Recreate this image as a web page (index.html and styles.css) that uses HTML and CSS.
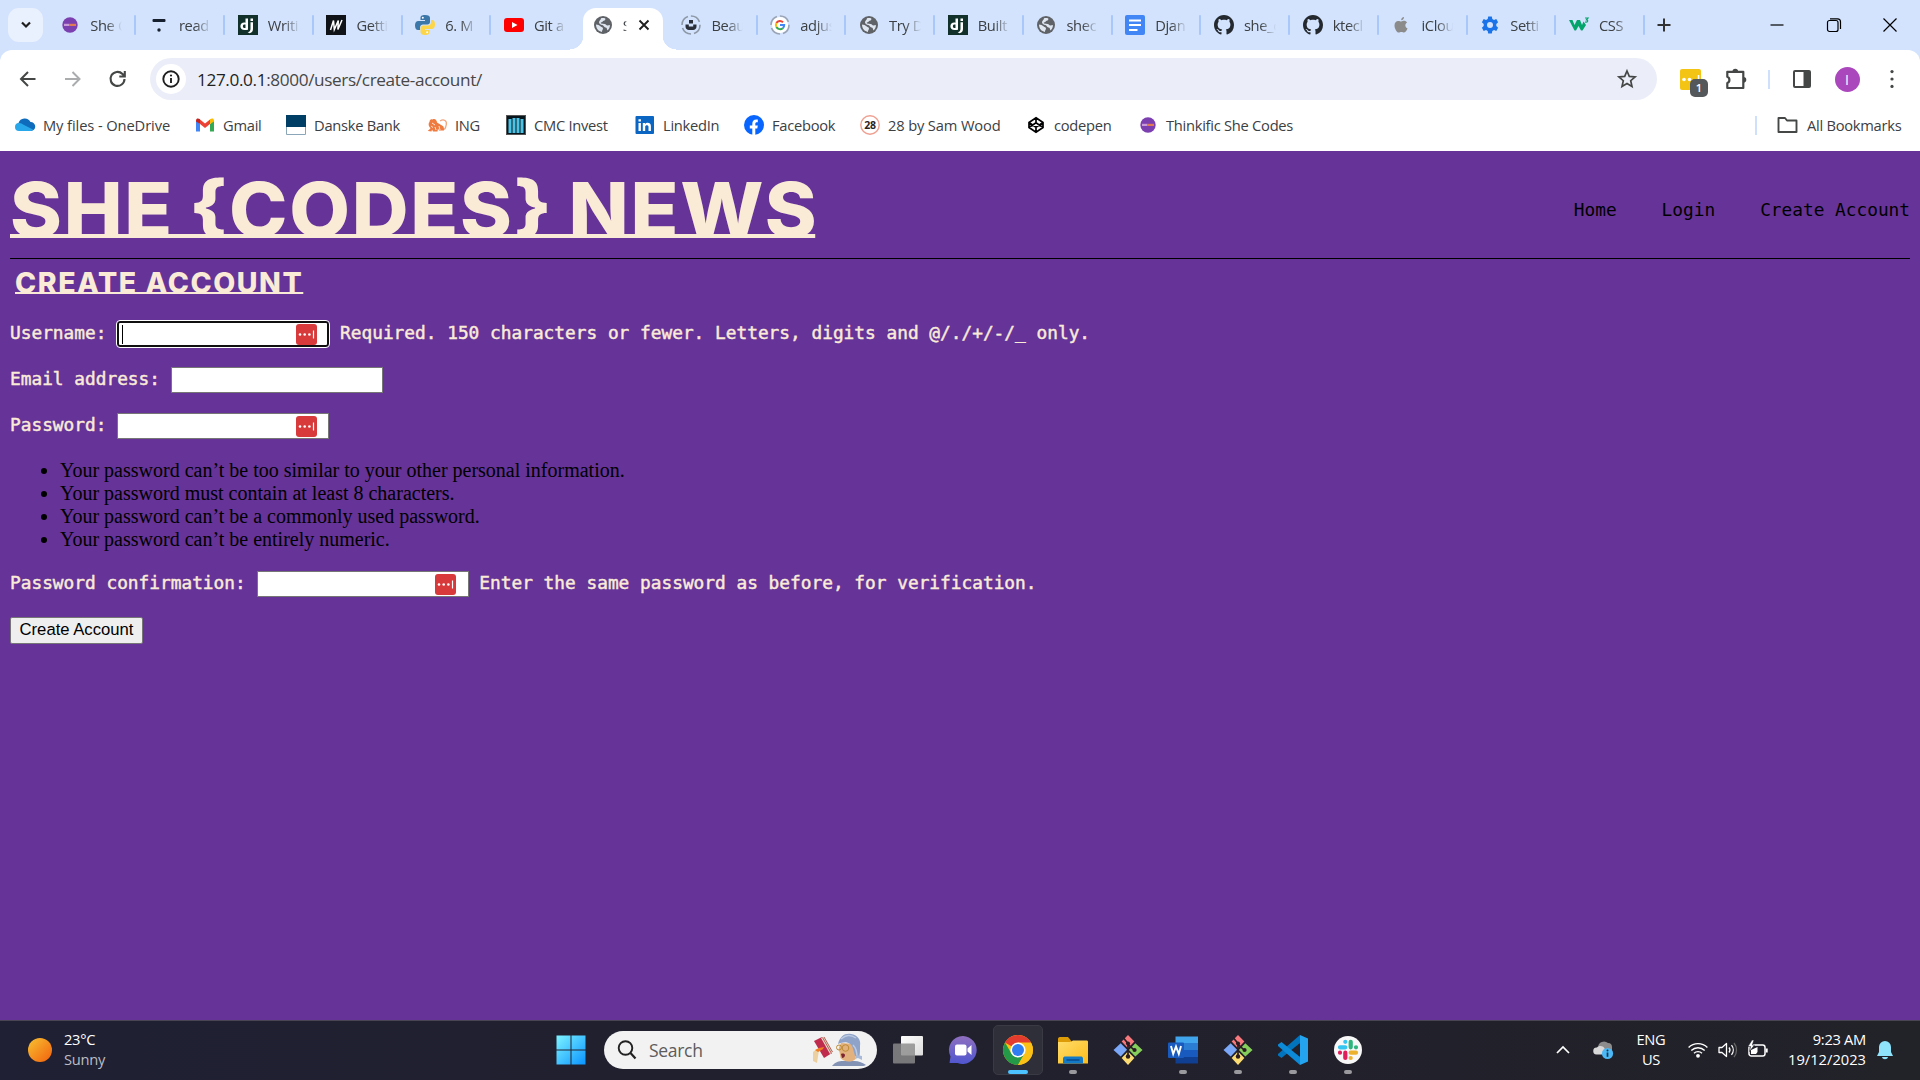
FILE: index.html
```html
<!DOCTYPE html>
<html lang="en">
<head>
<meta charset="utf-8">
<title>She Codes News</title>
<link rel="stylesheet" href="styles.css">
</head>
<body>
<svg class="sprite" aria-hidden="true">
  <defs>
    <linearGradient id="gSun" x1="0" y1="0" x2="1" y2="1"><stop offset="0" stop-color="#f7c232"/><stop offset="1" stop-color="#f1600d"/></linearGradient>
    <linearGradient id="gWin" x1="0" y1="0" x2="1" y2="1"><stop offset="0" stop-color="#7df3ff"/><stop offset="1" stop-color="#0a94ff"/></linearGradient>
    <linearGradient id="gTeams" x1="0" y1="0" x2="0" y2="1"><stop offset="0" stop-color="#8f6fc0"/><stop offset="1" stop-color="#4f56cf"/></linearGradient>
    <linearGradient id="gFolder" x1="0" y1="0" x2="1" y2="1"><stop offset="0" stop-color="#ffdc6b"/><stop offset="1" stop-color="#fcbc1b"/></linearGradient>
    <linearGradient id="gView" x1="0" y1="0" x2="1" y2="1"><stop offset="0" stop-color="#fff"/><stop offset="1" stop-color="#dcdcdc"/></linearGradient>
  </defs>
  <symbol id="she" viewBox="0 0 20 20"><circle cx="10" cy="10" r="7.7" fill="#7c3fb0"/><rect x="4" y="8.8" width="5.5" height="2.2" fill="#c79ad8"/><rect x="9.5" y="8.8" width="6.5" height="2.2" fill="#e07a55"/></symbol>
  <symbol id="dj" viewBox="0 0 20 20"><rect width="20" height="20" fill="#11312a"/><path d="M10 3.5v11.2c-1.3.3-2.2.4-3.3.4-2.9 0-4.3-1.4-4.3-3.8 0-2.300 1.500-3.800 3.800-3.800.5 0 .9 0 1.300.2V3.500zM7.500 9.600c-.3-.1-.6-.1-.9-.1-1.100 0-1.700.6-1.700 1.800 0 1.100.6 1.800 1.700 1.800h.9zM15 7.300v6.200c0 2.500-.6 3.700-3.400 4.700l-2-.9c2.400-.9 2.900-1.800 2.900-3.900V7.300zM12.500 3.500H15v2.400h-2.500z" fill="#fff"/></symbol>
  <symbol id="globe" viewBox="0 0 20 20"><circle cx="10" cy="10" r="9" fill="#5f6368"/><path d="M3 9.500c1.800.2 3.400.8 4.800 2 .8.700 2.200.6 2.200 2 0 1.200-1 1.500-1.100 3.400C5.500 16.400 3 13.500 3 9.500zM8 3.300c1.500-.5 3-.4 4.300.1.2 1.400-.3 2-1.600 2.300-1 .3-.9 1.400-2.200 1.500-.8.100-1 .9-.4 1.300l3.700.5c1.100.2 1.400 1.500 2.600 1.500l2.500-.6c.2 2.500-1.100 4.400-2.500 5.600-.5-1.600-.3-2.800-2-3-1.600-.3-1.600-2-3.100-2.400C7.500 9.600 6 9 6 7.300 6 5.600 7.900 5.300 8 3.300z" fill="#dfe6f0"/></symbol>
  <symbol id="gh" viewBox="0 0 16 16"><path fill="#24292f" d="M8 0C3.580 0 0 3.580 0 8c0 3.540 2.290 6.530 5.470 7.590.4.070.55-.17.55-.38 0-.19-.01-.82-.01-1.490-2.010.37-2.530-.49-2.690-.94-.09-.23-.48-.94-.82-1.130-.28-.15-.68-.52-.01-.53.63-.01 1.080.58 1.230.82.72 1.210 1.870.87 2.330.66.070-.52.280-.87.510-1.070-1.780-.2-3.640-.89-3.640-3.950 0-.87.310-1.590.82-2.150-.08-.2-.36-1.020.080-2.120 0 0 .67-.21 2.200.82.640-.18 1.320-.27 2-.27s1.360.09 2 .27c1.530-1.040 2.200-.82 2.200-.82.440 1.100.160 1.920.080 2.120.510.560.820 1.270.820 2.150 0 3.070-1.870 3.750-3.650 3.950.290.250.540.730.540 1.480 0 1.070-.01 1.930-.01 2.200 0 .21.150.460.550.38A8.010 8.010 0 0 0 16 8c0-4.420-3.580-8-8-8z"/></symbol>
  <symbol id="git" viewBox="0 0 32 32"><path d="M16 0l6.800 7-6.800 7-6.800-7z" fill="#f7797d"/><path d="M8.200 8.800l6.800 7-6.800 7L.5 16z" fill="#7aa7f7"/><path d="M23.800 8.800L31.500 16l-7.700 7-6.800-7z" fill="#87cf5b"/><path d="M16 17.500l6.800 7L16 32l-6.800-7.500z" fill="#fbdc72"/><path d="M11 3l5 6v14M16 10l6.500 6" fill="none" stroke="#2a1c22" stroke-width="1.800"/><circle cx="16" cy="9" r="2.200" fill="#2a1c22"/><circle cx="16" cy="23" r="2.400" fill="#2a1c22"/><circle cx="23" cy="16" r="2.200" fill="#2a1c22"/></symbol>
  <symbol id="pm" viewBox="0 0 21 21"><rect width="21" height="21" rx="3" fill="#d8393a"/><circle cx="4" cy="10.500" r="1.300" fill="#fff"/><circle cx="8.700" cy="10.500" r="1.300" fill="#fff"/><circle cx="13.400" cy="10.500" r="1.300" fill="#fff"/><path d="M17.500 6.500v8" stroke="#fff" stroke-width="1.200"/></symbol>
</svg>

<header class="browser">
  <div class="tabstrip">
    <div class="tab-search"><svg width="12" height="12" viewBox="0 0 12 12"><path d="M2 3.500l4 4 4-4" fill="none" stroke="#1f1f1f" stroke-width="2.200"/></svg></div>
    <div class="tab"><svg class="fav"><use href="#she"/></svg><span>She C</span></div>
    <div class="tab"><svg class="fav" viewBox="0 0 20 20"><rect x="3.500" y="4" width="13" height="3" rx="1" fill="#17202e"/><circle cx="10" cy="15" r="1.700" fill="#17202e"/></svg><span>read</span></div>
    <div class="tab"><svg class="fav"><use href="#dj"/></svg><span>Writi</span></div>
    <div class="tab"><svg class="fav" viewBox="0 0 20 20"><rect width="20" height="20" fill="#101418"/><path d="M4.500 15L7.500 5.500l.8 9 4-9-.4 9L16 5" fill="none" stroke="#fff" stroke-width="1.500"/></svg><span>Getti</span></div>
    <div class="tab"><svg class="fav" viewBox="0 0 20 20"><path d="M10 0c-3.500 0-4.500 1-4.500 3v2H10v1H3.500C1 6 0 8 0 10.500S1 15 3 15h2v-2.500C5 10.500 6.500 9.500 8 9.500h4.500c1.500 0 2.500-1 2.500-2.500V3c0-2-1.500-3-5-3z" fill="#3b77a8"/><path d="M10 20c3.500 0 4.500-1 4.500-3v-2H10v-1h6.500c2.500 0 3.500-2 3.500-4.500S19 5 17 5h-1v2.500c0 2-1.500 3-3 3H8C6.500 10.500 5.500 11.500 5.500 13v4c0 2 1.500 3 4.500 3z" fill="#fcd548"/><circle cx="7.800" cy="2.800" r="1" fill="#fff"/><circle cx="12.200" cy="17.200" r="1" fill="#fff"/></svg><span>6. M</span></div>
    <div class="tab no-sep"><svg class="fav" viewBox="0 0 20 20"><rect y="3" width="20" height="14" rx="3" fill="#f00"/><path d="M8 7l5.500 3L8 13z" fill="#fff"/></svg><span>Git a</span></div>
    <div class="tab active"><svg class="fav"><use href="#globe"/></svg><span class="tiny">S</span><svg class="tab-close" viewBox="0 0 12 12"><path d="M1.500 1.500l9 9M10.500 1.500l-9 9" stroke="#1f1f1f" stroke-width="1.900"/></svg></div>
    <div class="tab"><svg class="fav" viewBox="0 0 20 20"><circle cx="10" cy="10" r="9" fill="none" stroke="#8e99a8" stroke-width="1.600" stroke-dasharray="11 3"/><path d="M8 5h4v3.500H8zM4.500 9.500h3.300v2h4.400v-2h3.300v2c0 2-1.500 3.500-3.500 3.500H8c-2 0-3.500-1.500-3.500-3.500z" fill="#2b3038"/></svg><span>Beau</span></div>
    <div class="tab"><svg class="fav" viewBox="0 0 20 20"><circle cx="10" cy="10" r="8" fill="#fff"/><circle cx="10" cy="10" r="9" fill="none" stroke="#9aa4b4" stroke-width="1.600" stroke-dasharray="11 3"/><g fill="none" stroke-width="2"><path d="M13 7.200A4.200 4.200 0 0 0 6.400 8" stroke="#ea4335"/><path d="M6.400 8a4.200 4.200 0 0 0 0 4" stroke="#fbbc05"/><path d="M6.400 12a4.200 4.200 0 0 0 6.400 1.200" stroke="#34a853"/><path d="M12.800 13.200A4.200 4.200 0 0 0 14.200 10H10" stroke="#4285f4"/></g></svg><span>adjus</span></div>
    <div class="tab"><svg class="fav"><use href="#globe"/></svg><span>Try D</span></div>
    <div class="tab"><svg class="fav"><use href="#dj"/></svg><span>Built</span></div>
    <div class="tab"><svg class="fav"><use href="#globe"/></svg><span>shec</span></div>
    <div class="tab"><svg class="fav" viewBox="0 0 20 20"><rect width="20" height="20" rx="2" fill="#4285f4"/><path d="M4 5.500h12M4 10h12M4 15h8.500" stroke="#fff" stroke-width="2"/></svg><span>Djan</span></div>
    <div class="tab"><svg class="fav"><use href="#gh"/></svg><span>she_c</span></div>
    <div class="tab"><svg class="fav"><use href="#gh"/></svg><span>ktecl</span></div>
    <div class="tab"><svg class="fav" viewBox="0 0 20 20"><path d="M13 2c.1 1.800-1.200 3.200-2.800 3.300C10 3.600 11.500 2.200 13 2zM10.300 6.500c.8 0 1.500-.7 2.800-.7 1.200 0 2.300.7 2.900 1.600-2.500 1.600-2 4.900.5 5.900-.6 1.700-1.800 4.200-3.400 4.200-1.100 0-1.400-.6-2.700-.6s-1.700.6-2.700.6C5.900 17.500 3.500 13.500 3.500 10.400c0-2.800 1.700-4.500 3.700-4.500 1.400 0 2.200.6 3.100.6z" fill="#8b8b8b"/></svg><span>iClou</span></div>
    <div class="tab"><svg class="fav" viewBox="0 0 20 20"><path d="M8.200 1.500h3.600l.5 2.400 1.700 1 2.300-.8 1.800 3.200-1.800 1.700v2l1.800 1.700-1.800 3.200-2.300-.8-1.700 1-.5 2.400H8.200l-.5-2.400-1.700-1-2.300.8-1.800-3.200L3.700 11V9L1.900 7.300l1.800-3.200 2.300.8 1.700-1z" fill="#1a73e8"/><circle cx="10" cy="10" r="3" fill="#d3e3fd"/></svg><span>Setti</span></div>
    <div class="tab"><svg class="fav" viewBox="0 0 20 20"><path d="M0 5h3.500l2 5 2.500-5h3l2 5 1.500-3.500 2.500 3.500-3.500 5.500h-1.500L9.500 11 7 15.500H5.500z" fill="#04a56c"/><path d="M16 3h3l-1.500 1.800c2 .2 1.500 2.700-1.500 2.200" fill="none" stroke="#04a56c" stroke-width="1.200"/></svg><span>CSS</span></div>
    <svg class="new-tab" viewBox="0 0 14 14"><path d="M7 .5v13M.5 7h13" stroke="#333" stroke-width="2"/></svg>
    <div class="win-controls">
      <svg viewBox="0 0 16 16"><path d="M1.500 8h13" stroke="#000" stroke-width="1.200"/></svg>
      <svg viewBox="0 0 16 16"><rect x="1.500" y="3.500" width="10.500" height="11" rx="2" fill="none" stroke="#000" stroke-width="1.200"/><path d="M4 1.800h7.500a3 3 0 0 1 3 3V12" fill="none" stroke="#000" stroke-width="1.200"/></svg>
      <svg viewBox="0 0 16 16"><path d="M1.500 1.500l13 13M14.500 1.500l-13 13" stroke="#000" stroke-width="1.200"/></svg>
    </div>
  </div>

  <div class="toolbar">
    <div class="nav-buttons">
      <svg viewBox="0 0 20 20"><path d="M17.500 10H3M10 3l-7 7 7 7" fill="none" stroke="#454746" stroke-width="2"/></svg>
      <svg viewBox="0 0 20 20"><path d="M2 10h14.500M9.500 3l7 7-7 7" fill="none" stroke="#aaacae" stroke-width="2"/></svg>
      <svg viewBox="0 0 20 20"><path d="M16.500 10a7 7 0 1 1-2-5l2 2M16.800 2v5.500h-5.500" fill="none" stroke="#454746" stroke-width="2.100"/></svg>
    </div>
    <div class="omnibox">
      <div class="site-info"><svg viewBox="0 0 20 20"><circle cx="10" cy="10" r="7.700" fill="none" stroke="#1f1f1f" stroke-width="1.900"/><path d="M10 9v5" stroke="#1f1f1f" stroke-width="1.900"/><circle cx="10" cy="6.500" r="1.100" fill="#1f1f1f"/></svg></div>
      <div class="url"><b>127.0.0.1</b>:8000/users/create-account/</div>
      <svg class="star" viewBox="0 0 20 20"><path d="M10 2l2.300 5.400 5.800.5-4.400 3.800 1.300 5.700-5-3-5 3 1.300-5.700L1.900 7.900l5.800-.5z" fill="none" stroke="#454746" stroke-width="1.700"/></svg>
    </div>
    <div class="tools">
      <div class="ext"><svg viewBox="0 0 21 21"><rect width="21" height="21" rx="2" fill="#f3c414"/><circle cx="4" cy="10.500" r="1.800" fill="#fff"/><circle cx="9.500" cy="10.500" r="1.800" fill="#fff"/><path d="M18.500 6v8" stroke="#fff" stroke-width="1.500"/></svg><span class="count">1</span></div>
      <svg class="puzzle" viewBox="0 0 22 22"><path d="M2.300 3.800h16V20h-16v-5c2.800-1 2.800-5.200 0-6.200z" fill="none" stroke="#454746" stroke-width="2.200" stroke-linejoin="round"/><path d="M7.500 3.500a2.800 2.800 0 0 1 5.600 0zM18.500 9a2.800 2.800 0 0 1 0 5.600z" fill="#454746"/></svg>
      <i class="divider"></i>
      <svg class="panel" viewBox="0 0 20 20"><rect x="2" y="2" width="16" height="16" rx="1" fill="none" stroke="#454746" stroke-width="2"/><path d="M11.500 2H18v16h-6.500z" fill="#454746"/></svg>
      <span class="avatar">I</span>
      <svg class="kebab" viewBox="0 0 6 20"><circle cx="3" cy="1.800" r="1.800" fill="#454746"/><circle cx="3" cy="10" r="1.800" fill="#454746"/><circle cx="3" cy="18.200" r="1.800" fill="#454746"/></svg>
    </div>
  </div>

  <nav class="bookmarks">
    <a class="bm-onedrive"><svg viewBox="0 0 20 20"><path d="M4 15.500A4 4 0 0 1 3.500 8a6.500 6.500 0 0 1 12-1A4.500 4.500 0 0 1 16 16z" fill="#0f6cbd"/><path d="M0 12a4 4 0 0 1 4-4c2 0 3 .8 5 2l9 4.500c-.5.800-1.500 1.500-3 1.500H4a4 4 0 0 1-4-4z" fill="#28a8ea"/></svg><span>My files - OneDrive</span></a>
    <a class="bm-gmail"><svg viewBox="0 0 20 20"><path d="M1 5v11.500h4V9z" fill="#4285f4"/><path d="M15 9v7.500h4V5z" fill="#34a853"/><path d="M5 9V4.500l5 4 5-4V9l-5 4z" fill="#ea4335"/><path d="M1 5.500C1 3 3.500 2.900 5 4.300V9L1 6.500z" fill="#c5221f"/><path d="M19 5.500c0-2.500-2.500-2.600-4-1.200V9l4-2.500z" fill="#fbbc04"/></svg><span>Gmail</span></a>
    <a class="bm-danske"><svg viewBox="0 0 20 20"><path d="M.5.500h19v19H.5z" fill="#fff" stroke="#8aa6b8"/><path d="M0 0h20v12H0z" fill="#003e66"/></svg><span>Danske Bank</span></a>
    <a class="bm-ing"><svg viewBox="0 0 20 20"><path d="M1 16c0-1.500 2-1 2.500-3C1 11 1.500 8 2.500 7c0-2 1.500-3.500 3-2.500C8 3 10 5.500 10 7.500l5 3c2 1 2 2.500 2 5h-5l-1-2-.5 3H6l-1-2-.5 2z" fill="#f07b3f"/><path d="M13 6c4-2.500 7 0 6.300 3.500-.3 2.500-1 4-2 5" fill="none" stroke="#f2a57c" stroke-width="1.300"/><path d="M5 8l3 2M8 12l1 3M4 11l2 1.500M12 11l1 4" stroke="#fff" stroke-width=".8"/></svg><span>ING</span></a>
    <a class="bm-cmc"><svg viewBox="0 0 20 20"><rect x=".5" y=".5" width="19" height="19" fill="#07161d" stroke="#555"/><path d="M2.500 4h3v14h-3zM6.500 3h3v15h-3zM10.500 3h3v15h-3zM14.500 4h3v14h-3z" fill="#4cc3e6"/></svg><span>CMC Invest</span></a>
    <a class="bm-in"><svg viewBox="0 0 20 20"><rect x=".5" y="1" width="18.500" height="18" rx="1" fill="#0a66c2"/><path d="M3.500 8h2.400v8H3.500zM3.500 4.200h2.400v2.400H3.500zM7.800 8h2.300v1c1.500-2 5.800-1.700 5.800 2v5h-2.400v-4.300c0-2-3.300-2-3.300 0V16H7.800z" fill="#fff"/></svg><span>LinkedIn</span></a>
    <a class="bm-fb"><svg viewBox="0 0 20 20"><circle cx="10" cy="10" r="10" fill="#0866ff"/><path d="M8.300 20v-6.500H5.800v-3h2.500V9c0-3.500 1.800-5 5.500-4.400v2.700c-2-.2-2.500.4-2.500 1.500v1.700h2.500l-.5 3h-2V20z" fill="#fff"/></svg><span>Facebook</span></a>
    <a class="bm-28"><svg viewBox="0 0 20 20"><circle cx="10" cy="10" r="9.200" fill="#fff" stroke="#efa091" stroke-width="1.400"/><text x="10" y="14" text-anchor="middle" class="num28">28</text></svg><span>28 by Sam Wood</span></a>
    <a class="bm-codepen"><svg viewBox="0 0 20 20"><path d="M10 2.800l7 4.700v5L10 17.200l-7-4.700v-5zM3 7.500l7 4.700 7-4.700M3 12.500l7-4.700 7 4.700M10 2.800v5M10 12.200v5" fill="none" stroke="#000" stroke-width="1.700"/></svg><span>codepen</span></a>
    <a class="bm-she"><svg><use href="#she"/></svg><span>Thinkific She Codes</span></a>
    <i class="divider"></i>
    <a class="all-bm"><svg viewBox="0 0 21 20"><path d="M1.500 3h6.500l2 2.500h9.500V17h-18z" fill="none" stroke="#454746" stroke-width="1.900" stroke-linejoin="round"/></svg><span>All Bookmarks</span></a>
  </nav>
</header>

<main class="page">
  <div class="masthead">
    <h1>SHE <span class="brace">{</span>CODES<span class="brace">}</span> NEWS</h1>
    <nav class="site-nav"><a>Home</a><a>Login</a><a>Create Account</a></nav>
  </div>
  <h2>CREATE ACCOUNT</h2>
  <form>
    <div class="row"><label>Username:</label><div class="input focused"><i class="caret"></i><svg><use href="#pm"/></svg></div><span>Required. 150 characters or fewer. Letters, digits and @/./+/-/_ only.</span></div>
    <div class="row"><label>Email address:</label><div class="input"></div></div>
    <div class="row"><label>Password:</label><div class="input"><svg><use href="#pm"/></svg></div></div>
    <ul>
      <li>Your password can’t be too similar to your other personal information.</li>
      <li>Your password must contain at least 8 characters.</li>
      <li>Your password can’t be a commonly used password.</li>
      <li>Your password can’t be entirely numeric.</li>
    </ul>
    <div class="row"><label>Password confirmation:</label><div class="input confirm"><svg><use href="#pm"/></svg></div><span>Enter the same password as before, for verification.</span></div>
    <button type="button">Create Account</button>
  </form>
</main>

<footer class="taskbar">
  <div class="weather">
    <svg viewBox="0 0 24 24"><circle cx="12" cy="12" r="12" fill="url(#gSun)"/></svg>
    <div class="lines"><div>23°C</div><div class="dim">Sunny</div></div>
  </div>
  <div class="apps">
    <div class="app start"><svg viewBox="0 0 30 30"><path d="M.5.500h14v14H.5zM15.500.500h14v14h-14zM.5 15.500h14v14H.5zM15.500 15.500h14v14h-14z" fill="url(#gWin)"/></svg></div>
    <div class="search">
      <svg class="lens" viewBox="0 0 20 20"><circle cx="8.500" cy="8" r="6.800" fill="none" stroke="#222" stroke-width="1.900"/><path d="M13.500 13l5 5.500" stroke="#222" stroke-width="2.200"/></svg>
      <span>Search</span>
      <svg class="art" viewBox="0 0 55 34"><path d="M2 8L10 4l10 16-8 5z" fill="#c02a4c"/><path d="M9 5l3-1.500L21 19l-3 2z" fill="#ead9c5"/><path d="M10.500 4.500l9 16M12 4l8.500 15" stroke="#a5433c" stroke-width=".8"/><path d="M1 19l4-3 2 1-2 13-4-2z" fill="#ecd0a0"/><path d="M3 17l4-2 5-1-1 2-5 3z" fill="#f07f22"/><path d="M20 33c3-4 7-5 11-5h11c5 0 9 2 12 4-1 1-4 1-6 1z" fill="#8292b4"/><path d="M29 10c-2 4-3 6-1.500 9l1 6c3 4 11 5 15 1V11z" fill="#e3b17e"/><path d="M26 11C28 3 33 0 39 1c7 1 10 6 9 12 0 5 0 9-1 12l-4-2-2-7c-1-4-3-6-6-6.500-3-.5-6 .5-9 1.500z" fill="#8fa3c8"/><path d="M29 6c5-4 9-5 15-1M41 12c3 3 4 7 4 12" fill="none" stroke="#bccbe4" stroke-width="1.500"/><path d="M44 22l6 1v4l-4-2-3 1z" fill="#a9bad9"/><circle cx="27" cy="14.500" r="2.500" fill="none" stroke="#bb8b35"/><circle cx="33.500" cy="15" r="3.300" fill="none" stroke="#bb8b35"/><path d="M29 21c2-1 4 0 4 1s-1 3-3 3z" fill="#7d2431"/></svg>
    </div>
    <div class="app"><svg viewBox="0 0 30 30"><rect x="8" y="1" width="22" height="19.500" rx="1" fill="url(#gView)"/><rect y="8.500" width="22" height="20" rx="1" fill="#8b8b8b" fill-opacity=".82"/></svg></div>
    <div class="app"><svg viewBox="0 0 30 30"><path d="M15 1a14 14 0 1 1-5.500 27H1.500l1-6.500A14 14 0 0 1 15 1z" fill="url(#gTeams)"/><rect x="7" y="9.500" width="11.500" height="11" rx="2" fill="#fff"/><path d="M19.500 13.500l4-3.500v10l-4-3.500z" fill="#fff"/></svg></div>
    <div class="app current"><svg viewBox="0 0 30 30"><circle cx="15" cy="15" r="15" fill="#fbc116"/><path d="M15 15L2 7.500A15 15 0 0 1 28 7.500H15z" fill="#e33b2e"/><path d="M2 7.500A15 15 0 0 0 15 30l6.500-11.300L8.500 18.700z" fill="#249a48"/><path d="M15 8h13.200A15 15 0 0 1 15 30l6.500-11.300z" fill="#fbc116"/><circle cx="15" cy="15" r="7.600" fill="#fff"/><circle cx="15" cy="15" r="6" fill="#2f7df0"/></svg><i></i></div>
    <div class="app open"><svg viewBox="0 0 30 30"><path d="M0 4c0-1 .5-2 2-2h8l3 3.500V10H0z" fill="#de9b08"/><path d="M0 7h12l3-1.500h13.500C29.500 5.500 30 6 30 7v21.500H0z" fill="url(#gFolder)"/><path d="M5 28.500V24c0-2 1-2.500 2.500-2.500h15c1.500 0 2.500.5 2.500 2.500v4.500z" fill="#127ac7"/><path d="M8.500 25h13" stroke="#083f7c" stroke-width="1.200"/></svg><i></i></div>
    <div class="app"><svg><use href="#git"/></svg></div>
    <div class="app open"><svg viewBox="0 0 30 30"><path d="M7.500 1.500H30V8H7.500z" fill="#41a5ee"/><path d="M7.500 8H30v7H7.500z" fill="#2b7cd3"/><path d="M7.500 15H30v7H7.500z" fill="#185abd"/><path d="M7.500 22H30v6.500H7.500z" fill="#103f91"/><rect x="0" y="7.500" width="16" height="15.500" rx="1" fill="#185abd"/><path d="M3 11l2.200 8L8 11.500l2.800 7.500L13 11" fill="none" stroke="#fff" stroke-width="1.900"/></svg><i></i></div>
    <div class="app open"><svg><use href="#git"/></svg><i></i></div>
    <div class="app open"><svg viewBox="0 0 30 30"><path d="M22 0l8 3.500v23L22 30z" fill="#24a3ee"/><path d="M22 0v8L3.500 23 0 20.500V19z" fill="#0274bd"/><path d="M22 30v-8L3.500 7 0 9.500V11z" fill="#0c8ad8"/></svg><i></i></div>
    <div class="app open"><svg viewBox="0 0 30 30"><circle cx="15" cy="15" r="14" fill="#f8f8f8"/><g stroke-width="4.200" stroke-linecap="round"><path d="M12.300 6.800v0M7 12.300h5.300" stroke="#36c5f0"/><path d="M17.700 6.800v5.500M23 12.300h0" stroke="#2eb67d"/><path d="M17.700 17.700H23M17.700 23v0" stroke="#ecb22e"/><path d="M12.300 17.700V23M7 17.700h0" stroke="#e01e5a"/></g></svg><i></i></div>
  </div>
  <div class="tray">
    <svg class="chev" viewBox="0 0 14 10"><path d="M1 8l6-6 6 6" fill="none" stroke="#fff" stroke-width="1.700"/></svg>
    <svg class="cloud" viewBox="0 0 20 20"><path d="M5 7a6 6 0 0 1 10-4c3 0 4 2 4 4v6H8z" fill="#8c8c8c"/><path d="M3.500 14.500A3.500 3.500 0 0 1 4 7.500c2-2.500 7-2 8 2l1 5z" fill="#d8d8d8"/><circle cx="14.500" cy="13.500" r="5.600" fill="#4cb8f5"/><path d="M14.500 12.500v4.300" stroke="#10344a" stroke-width="1.700"/><circle cx="14.500" cy="10.500" r="1" fill="#10344a"/></svg>
    <div class="lang lines"><div>ENG</div><div>US</div></div>
    <svg class="wifi" viewBox="0 0 20 16"><g fill="none" stroke="#fff" stroke-width="1.400"><path d="M.6 5.500a13.300 13.300 0 0 1 18.800 0M3.300 8.500a9.500 9.500 0 0 1 13.400 0M6 11.300a5.700 5.700 0 0 1 8 0"/></g><circle cx="10" cy="13.800" r="1.900" fill="#fff"/></svg>
    <svg class="vol" viewBox="0 0 20 16"><path d="M1 5.500h3L8.500 1.500v13L4 10.500H1z" fill="none" stroke="#fff" stroke-width="1.300" stroke-linejoin="round"/><path d="M11 5.500a4 4 0 0 1 0 5M13.500 3.200a7.500 7.500 0 0 1 0 9.600" fill="none" stroke="#fff" stroke-width="1.300"/><path d="M16 1a11 11 0 0 1 0 14" fill="none" stroke="#666" stroke-width="1.300"/></svg>
    <svg class="batt" viewBox="0 0 20 16"><rect x="1" y="3" width="16" height="11" rx="2.300" fill="none" stroke="#fff" stroke-width="1.500"/><path d="M3 12V8L9.500 5v5L8 12z" fill="#fff"/><path d="M18.700 6.500v4" stroke="#fff" stroke-width="2"/><path d="M4 -2L0 4.500h2.500l-1 5L6.500 3H4.300L6 -2z" fill="#fff" stroke="#21212b" stroke-width=".6"/></svg>
    <div class="clock lines"><div>9:23 AM</div><div class="date">19/12/2023</div></div>
    <svg class="bell" viewBox="0 0 16 19"><path d="M8 0a6 6 0 0 1 6 6v5l2 4H0l2-4V6a6 6 0 0 1 6-6zM5 16h6c-.5 3-5.500 3-6 0z" fill="#8fe3fb"/></svg>
  </div>
</footer>
</body>
</html>
```

FILE: styles.css
```css
* { box-sizing: border-box; }

body {
  margin: 0;
  width: 1920px;
  height: 1080px;
  overflow: hidden;
  display: flex;
  flex-direction: column;
  background: #663399;
  font-family: "Open Sans", "Noto Sans", sans-serif;
}

svg { display: block; flex: none; overflow: visible; }
.sprite { position: absolute; width: 0; height: 0; overflow: hidden; }

/* Browser chrome */
.browser { height: 151px; background: #d3e3fd; color: #3c4043; flex: none; }

.tabstrip { height: 50px; display: flex; align-items: center; padding-left: 8px; }
.tab-search {
  width: 35px; height: 34px; margin-right: 3.7px;
  display: flex; align-items: center; justify-content: center;
  border-radius: 11px; background: #eaf1fe;
}
.tab {
  position: relative;
  width: 88.75px; height: 50px; flex: none;
  display: flex; align-items: center;
  padding-left: 13.5px;
  font-size: 14.7px; letter-spacing: -0.35px;
}
.tab::after {
  content: ""; position: absolute; right: -1px; top: 15px;
  width: 2px; height: 20px; background: #a8c7fa; border-radius: 1px;
}
.tab.no-sep::after { display: none; }
.fav { width: 20px; height: 20px; }
.tab span {
  width: 32px; margin-left: 10px; overflow: hidden; white-space: nowrap;
  -webkit-mask-image: linear-gradient(to right, #000 50%, transparent 100%);
  mask-image: linear-gradient(to right, #000 50%, transparent 100%);
}
.tab.active { z-index: 1; }
.tab.active::before {
  content: ""; position: absolute; z-index: -1; left: 4px; top: 8px;
  width: 80px; height: 42px; background: #fff; border-radius: 13px 13px 0 0;
}
.tab.active::after {
  z-index: -2; left: -9px; right: auto; top: 36px; width: 106px; height: 14px;
  border-radius: 0;
  background:
    radial-gradient(circle at 0 0, transparent 13px, #fff 13.5px) left / 14px 14px no-repeat,
    radial-gradient(circle at 100% 0, transparent 13px, #fff 13.5px) right / 14px 14px no-repeat;
}
.tab .tiny { width: 4px; }
.tab-close { width: 12px; height: 12px; margin-left: 11.5px; }
.new-tab { width: 14px; height: 14px; margin-left: 12.5px; }
.win-controls { display: flex; gap: 40.5px; margin-left: 98.5px; }
.win-controls svg { width: 16px; height: 16px; }

.toolbar {
  height: 58px; padding: 0 0 0 16px; background: #fff;
  border-radius: 12px 12px 0 0;
  display: flex; align-items: center;
}
.nav-buttons { display: flex; gap: 25px; width: 134px; padding-left: 2px; }
.nav-buttons svg { width: 20px; height: 20px; }
.omnibox {
  width: 1507px; height: 42px; border-radius: 21px; background: #ebeef8;
  display: flex; align-items: center; padding: 0 20px 0 6px;
}
.site-info {
  width: 30px; height: 30px; border-radius: 50%; background: #fff;
  display: flex; align-items: center; justify-content: center;
}
.site-info svg { width: 20px; height: 20px; }
.url { flex: 1; margin-left: 11px; font-size: 17.2px; letter-spacing: -0.37px; color: #474747; }
.url b { font-weight: 400; color: #1f1f1f; }
.star { width: 20px; height: 20px; }
.tools { display: flex; align-items: center; }
.ext { position: relative; margin-left: 23px; }
.ext svg { width: 21px; height: 21px; }
.count {
  position: absolute; left: 10px; top: 10px; width: 18px; height: 18px;
  border-radius: 5px; background: #55585b; color: #fff;
  font-size: 11px; font-weight: 600; line-height: 18px; text-align: center;
}
.puzzle { width: 22px; height: 22px; margin-left: 24px; }
.divider { width: 2px; height: 19px; background: #cfe0fc; }
.tools .divider { margin-left: 21px; }
.panel { width: 20px; height: 20px; margin-left: 22px; }
.avatar {
  width: 25px; height: 25px; margin-left: 22.5px; border-radius: 50%;
  background: #aa47bc; color: #fff; font-size: 14px; line-height: 25px; text-align: center;
}
.kebab { width: 6px; height: 18px; margin-left: 29.5px; }

.bookmarks {
  height: 43px; padding: 0 18px 9px 15px; background: #fff;
  display: flex; align-items: center;
}
.bookmarks a {
  display: flex; align-items: center; gap: 8px; white-space: nowrap;
  font-size: 14.7px; letter-spacing: -0.27px;
}
.bookmarks a span { margin-top: -1px; }
.bookmarks svg { width: 20px; height: 20px; }
.bm-onedrive { width: 180px; }
.bm-onedrive span { letter-spacing: -0.1px; }
.bm-gmail { width: 91px; }
.bm-danske { width: 141px; }
.bm-ing { width: 79px; }
.bm-cmc { width: 129px; }
.bm-in { width: 109px; }
.bm-fb { width: 116px; }
.bm-28 { width: 166px; }
.bm-28 span { letter-spacing: -0.15px; }
.bm-codepen { width: 112px; }
.bm-she { width: 617px; }
.num28 { font: 700 10.5px "Open Sans", sans-serif; fill: #2b2320; }
.bookmarks .divider { margin-left: 0; margin-right: 20px; }
.bookmarks .all-bm { gap: 9px; }
.bookmarks .all-bm svg { width: 21px; }

/* Web page */
.page { flex: 1; padding: 0 10px; color: #000; }
.masthead {
  height: 108px; border-bottom: 1px solid #000;
  display: flex; justify-content: space-between;
}
h1, h2 {
  margin: 0; color: #faebd7; font-family: Inter, sans-serif; font-weight: 800; white-space: nowrap;
}
h1 {
  font-size: 76px; line-height: 117px; letter-spacing: 1.7px; word-spacing: -4px;
  transform: scaleX(1.035); transform-origin: left;
  background: linear-gradient(#faebd7, #faebd7) 0 83px / 778px 4px no-repeat;
}
.brace { display: inline-block; transform: translateY(-5px) scaleY(0.88); }
.site-nav {
  display: flex; gap: 45px; padding-top: 47px;
  font: 17.8px/24px "DejaVu Sans Mono", monospace;
}
h2 {
  height: 62px; padding-left: 5px; font-size: 28.5px; line-height: 47px; letter-spacing: 1.55px;
  text-decoration: underline; text-decoration-skip-ink: none;
  text-decoration-thickness: 2px; text-underline-offset: -1px;
}
.row {
  height: 26px; margin-bottom: 20px; display: flex; align-items: center; gap: 10.8px;
  color: #faebd7; font: 17.81px/24px "DejaVu Sans Mono", monospace;
  -webkit-text-stroke: 0.45px #faebd7; white-space: nowrap;
}
.row label, .row span { margin-top: -2px; }
.input {
  width: 212px; height: 26px; background: #fff; border: 1px solid #767676;
  display: flex; align-items: center; justify-content: flex-end; padding-right: 11px;
}
.input svg { width: 21px; height: 21px; }
.input.confirm { padding-right: 12px; }
.input.focused {
  border: 2px solid #101010; border-radius: 3px; outline: 1px solid #fff;
  justify-content: space-between; padding: 0 10px 0 3px;
}
.caret { width: 1px; height: 19px; background: #000; }
ul {
  margin: 0 0 20px; padding-left: 50px;
  font: 20px/23px "Liberation Serif", serif;
}
button {
  display: block; width: 133px; height: 27px; padding: 0 0 2px;
  border: 1px solid #767676; border-radius: 2px; background: #efefef; color: #000;
  font: 16.67px/22px "Liberation Sans", sans-serif; white-space: nowrap;
}

/* Windows taskbar */
.taskbar {
  height: 60px; flex: none; border-top: 1px solid #4a4552; padding-bottom: 1px;
  background: linear-gradient(90deg, #1f2033, #21202d 50%, #222229);
  color: #fff; font-size: 14.7px; line-height: 20px; letter-spacing: -0.3px;
  display: flex; align-items: center;
}
.weather { width: 543.5px; padding-left: 28px; display: flex; align-items: center; gap: 12px; }
.weather svg { width: 24px; height: 24px; }
.lines { margin-top: -3px; }
.dim { color: #bdbcc4; }
.apps { display: flex; align-items: center; }
.app {
  position: relative; width: 50px; height: 50px; margin-right: 5px; border-radius: 5px;
  display: flex; align-items: center; justify-content: center;
}
.app svg { width: 30px; height: 30px; }
.app.start { margin: 0 8px 0 2.5px; }
.app.current { background: #2f2f3a; border: 1px solid #3a3a44; }
.app i {
  position: absolute; bottom: 1px; left: 21px; width: 8px; height: 4px;
  border-radius: 2px; background: #9a9a9e;
}
.app.current i { left: 14px; bottom: 0; width: 20px; background: #4cc2ff; }
.search {
  width: 273px; height: 38px; margin-right: 6px; padding: 0 10px 0 13px;
  display: flex; align-items: center; border-radius: 19px; background: #f2f2f2;
}
.lens { width: 20px; height: 20px; }
.search span { flex: 1; margin-left: 12px; color: #5c5c5c; font-size: 17.5px; }
.art { width: 55px; height: 34px; }
.tray { margin-left: auto; padding-right: 27px; display: flex; align-items: center; }
.chev { width: 14px; height: 10px; margin-right: 23px; }
.cloud { width: 20px; height: 20px; margin-right: 20px; }
.lang { width: 36px; text-align: center; margin-right: 19px; }
.wifi, .vol, .batt { width: 20px; height: 16px; margin-right: 10px; }
.clock { width: 88px; text-align: right; margin-right: 11px; }
.date { letter-spacing: 0; }
.bell { width: 16px; height: 19px; }
```
